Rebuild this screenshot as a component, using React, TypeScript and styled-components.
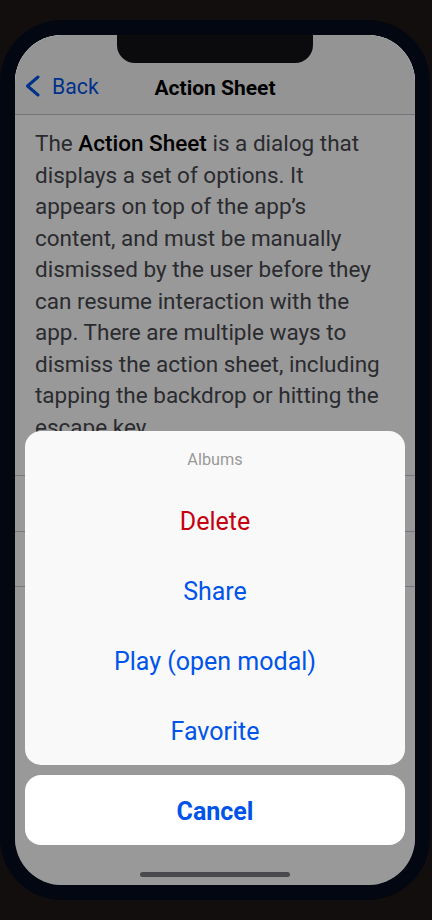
import React from "react";
import styled, { createGlobalStyle } from "styled-components";

const Global = createGlobalStyle`
  html, body {
    margin: 0;
    padding: 0;
    background: #110e0d;
    font-family: Roboto, "Liberation Sans", sans-serif;
  }
  * { box-sizing: border-box; }
`;

const Stage = styled.div`
  width: 432px;
  height: 920px;
  padding-top: 20px;
  overflow: hidden;
`;

const Phone = styled.div`
  width: 430px;
  height: 880px;
  padding: 15px;
  border-radius: 62px;
  background: #030712;
`;

const Screen = styled.div`
  position: relative;
  width: 400px;
  height: 850px;
  border-radius: 47px;
  overflow: hidden;
  background: #ffffff;
  display: flex;
  flex-direction: column;
`;

const Notch = styled.div`
  position: absolute;
  top: 0;
  left: 102px;
  width: 196px;
  height: 28px;
  background: #0b0b0e;
  border-radius: 0 0 18px 18px;
  z-index: 5;
`;

const Header = styled.header`
  padding-top: 24px;
  background: #f7f7f7;
  border-bottom: 1px solid #c4c4c8;
`;

const Toolbar = styled.div`
  position: relative;
  height: 55px;
  display: flex;
  align-items: center;
  justify-content: center;
`;

const BackButton = styled.button`
  position: absolute;
  left: 10px;
  top: 0;
  bottom: 0;
  display: flex;
  align-items: center;
  gap: 12px;
  border: 0;
  padding: 0 0 1px;
  background: transparent;
  color: #0054e9;
  font-family: Roboto, "Liberation Sans", sans-serif;
  font-size: 21.25px;
  cursor: pointer;
`;

const Title = styled.h1`
  margin: 0;
  font-size: 21px;
  font-weight: 700;
  color: #000;
  padding-top: 2px;
`;

const Content = styled.main`
  padding: 13px 30px 0 20px;
`;

const Paragraph = styled.p`
  margin: 0;
  font-size: 22.5px;
  line-height: 31.5px;
  color: #47494f;

  strong {
    color: #000;
    font-weight: 500;
  }
`;

const List = styled.div`
  margin-top: 32px;
  border-top: 1px solid #c8c7cc;
`;

const ListRow = styled.div`
  height: 55.5px;
  border-bottom: 1px solid #c8c7cc;
`;

const Backdrop = styled.div`
  position: absolute;
  inset: 0;
  background: rgba(0, 0, 0, 0.4);
  z-index: 2;
`;

const Sheet = styled.div`
  position: absolute;
  left: 10px;
  right: 10px;
  bottom: 40px;
  display: flex;
  flex-direction: column;
  gap: 10px;
  z-index: 3;
`;

const Group = styled.div<{ $cancel?: boolean }>`
  display: flex;
  flex-direction: column;
  border-radius: 16px;
  overflow: hidden;
  background: ${(p) => (p.$cancel ? "#ffffff" : "#f9f9f9")};
`;

const SheetTitle = styled.div`
  height: 54px;
  display: flex;
  align-items: center;
  justify-content: center;
  padding-top: 2px;
  font-size: 16.25px;
  color: #999999;
`;

const SheetButton = styled.button<{ $tone?: "danger" | "primary"; $bold?: boolean }>`
  height: 70px;
  border: 0;
  padding: 2px 0 0;
  background: transparent;
  font-family: Roboto, "Liberation Sans", sans-serif;
  font-size: 25px;
  font-weight: ${(p) => (p.$bold ? 700 : 400)};
  color: ${(p) => (p.$tone === "danger" ? "#c5000f" : "#0054e9")};
  cursor: pointer;
`;

const HomeBar = styled.div`
  position: absolute;
  left: 125px;
  bottom: 8px;
  width: 150px;
  height: 5px;
  border-radius: 3px;
  background: #4a4a4e;
  z-index: 4;
`;

const Chevron = () => (
  <svg width="15" height="22" viewBox="0 0 15 22" fill="none">
    <polyline
      points="13,2 2.5,11 13,20"
      stroke="currentColor"
      strokeWidth="3"
      strokeLinecap="round"
      strokeLinejoin="round"
    />
  </svg>
);

export default function App() {
  return (
    <>
      <Global />
      <Stage>
        <Phone>
          <Screen>
            <Notch />
            <Header>
              <Toolbar>
                <BackButton>
                  <Chevron />
                  Back
                </BackButton>
                <Title>Action Sheet</Title>
              </Toolbar>
            </Header>
            <Content>
              <Paragraph>
                The <strong>Action Sheet</strong> is a dialog that displays a set of
                options. It appears on top of the app’s content, and must be manually
                dismissed by the user before they can resume interaction with the app.
                There are multiple ways to dismiss the action sheet, including tapping
                the backdrop or hitting the escape key.
              </Paragraph>
            </Content>
            <List>
              <ListRow />
              <ListRow />
            </List>
            <Backdrop />
            <Sheet>
              <Group>
                <SheetTitle>Albums</SheetTitle>
                <SheetButton $tone="danger">Delete</SheetButton>
                <SheetButton>Share</SheetButton>
                <SheetButton>Play (open modal)</SheetButton>
                <SheetButton>Favorite</SheetButton>
              </Group>
              <Group $cancel>
                <SheetButton $bold>Cancel</SheetButton>
              </Group>
            </Sheet>
            <HomeBar />
          </Screen>
        </Phone>
      </Stage>
    </>
  );
}
